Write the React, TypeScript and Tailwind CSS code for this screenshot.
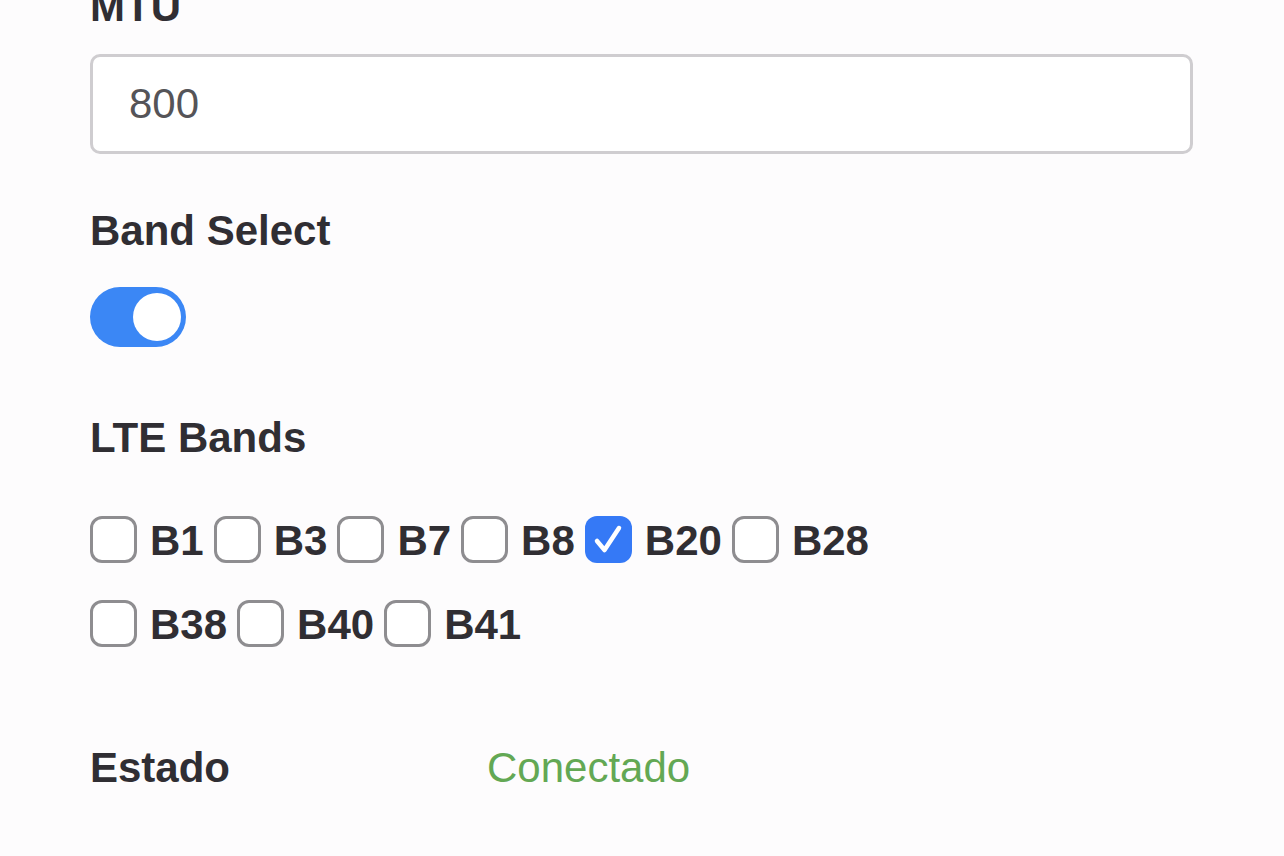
import React, { useState } from "react";

const bandsRow1 = ["B1", "B3", "B7", "B8", "B20", "B28"];
const bandsRow2 = ["B38", "B40", "B41"];

interface BandProps {
  name: string;
  checked: boolean;
  onToggle: (name: string) => void;
}

const Band = ({ name, checked, onToggle }: BandProps) => (
  <label className="flex items-start mr-[10px] cursor-pointer">
    <span
      onClick={() => onToggle(name)}
      className={
        checked
          ? "w-[47px] h-[47px] rounded-[12px] bg-[#3579f6] flex items-center justify-center mr-[13px]"
          : "w-[47px] h-[47px] rounded-[12px] border-[3px] border-[#8e8d90] bg-white mr-[13px]"
      }
    >
      {checked && (
        <svg width="36" height="36" viewBox="0 0 36 36" fill="none">
          <path
            d="M7 19 L14.5 28 L29 6"
            stroke="white"
            strokeWidth="4.5"
            strokeLinecap="round"
            strokeLinejoin="round"
          />
        </svg>
      )}
    </span>
    <span className="text-[42px] leading-[50px] font-bold text-[#302e33]">{name}</span>
  </label>
);

const App = () => {
  const [mtu, setMtu] = useState("800");
  const [bandSelect, setBandSelect] = useState(true);
  const [selected, setSelected] = useState<string[]>(["B20"]);

  const toggleBand = (name: string) => {
    setSelected((prev) =>
      prev.includes(name) ? prev.filter((b) => b !== name) : [...prev, name]
    );
  };

  return (
    <div
      className="min-h-screen bg-[#fdfcfd] overflow-hidden"
      style={{ fontFamily: '"Liberation Sans", Arial, sans-serif' }}
    >
      <div className="pl-[90px] w-[1193px] flex flex-col">
        <h3 className="mt-[-18px] text-[42px] leading-[50px] font-bold text-[#302e33]">MTU</h3>
        <input
          type="text"
          value={mtu}
          onChange={({ target }) => setMtu(target.value)}
          className="mt-[22px] h-[100px] w-full bg-white border-[3px] border-[#cfcdd0] rounded-[10px] pl-[36px] text-[42px] text-[#555458] outline-none"
        />

        <h3 className="mt-[52px] text-[42px] leading-[50px] font-bold text-[#302e33]">Band Select</h3>
        <button
          type="button"
          onClick={() => setBandSelect(!bandSelect)}
          className={
            bandSelect
              ? "mt-[31px] w-[96px] h-[60px] rounded-full bg-[#3b87f5] flex items-center justify-end pr-[5px]"
              : "mt-[31px] w-[96px] h-[60px] rounded-full bg-[#d9d9dc] flex items-center justify-start pl-[5px]"
          }
        >
          <span className="w-[48px] h-[48px] rounded-full bg-white block" />
        </button>

        <h3 className="mt-[66px] text-[42px] leading-[50px] font-bold text-[#302e33]">LTE Bands</h3>
        <div className="mt-[53px] flex flex-col gap-[34px]">
          <div className="flex">
            {bandsRow1.map((b) => (
              <Band key={b} name={b} checked={selected.includes(b)} onToggle={toggleBand} />
            ))}
          </div>
          <div className="flex">
            {bandsRow2.map((b) => (
              <Band key={b} name={b} checked={selected.includes(b)} onToggle={toggleBand} />
            ))}
          </div>
        </div>

        <div className="mt-[93px] flex text-[42px] leading-[50px]">
          <span className="w-[397px] font-bold text-[#302e33]">Estado</span>
          <span className="text-[#63a854]">Conectado</span>
        </div>
      </div>
    </div>
  );
};

export default App;
